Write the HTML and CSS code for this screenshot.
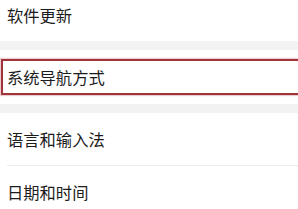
FILE: index.html
```html
<!DOCTYPE html>
<html lang="zh-CN">
<head>
    <meta charset="UTF-8">
    <title>设置</title>
    <link rel="stylesheet" href="styles.css">
</head>
<body>
    <div class="settings">
        <div class="group">
            <div class="item">软件更新</div>
        </div>

        <div class="group">
            <div class="item selected">
                系统导航方式
                <span class="highlight"></span>
            </div>
        </div>

        <div class="group">
            <div class="item divided">语言和输入法</div>
            <div class="item">日期和时间</div>
        </div>
    </div>
</body>
</html>
```

FILE: styles.css
```css
body {
    margin: 0;
    padding: 0;
    background: #f2f2f2;
    font-family: "Noto Sans CJK SC", "Noto Sans", sans-serif;
    color: #1c1c1c;
    overflow: hidden;
}

.settings {
    margin-top: -11px;
    display: flex;
    flex-direction: column;
    gap: 9px;
}

.group {
    background: #ffffff;
}

.item {
    position: relative;
    height: 52px;
    padding-left: 7px;
    display: flex;
    align-items: center;
    font-size: 16.3px;
}

.item.divided::after {
    content: "";
    position: absolute;
    left: 7px;
    right: 0;
    bottom: -1px;
    height: 1px;
    background: #ececec;
}

.item.divided {
    margin-bottom: 1px;
}

.selected {
    height: 54px;
}

.highlight {
    position: absolute;
    top: 9px;
    bottom: 9px;
    left: 1px;
    right: -4px;
    border: 2px solid #9e353a;
    box-shadow: 0 0 1px 1px rgba(200, 110, 115, 0.35);
}
```
